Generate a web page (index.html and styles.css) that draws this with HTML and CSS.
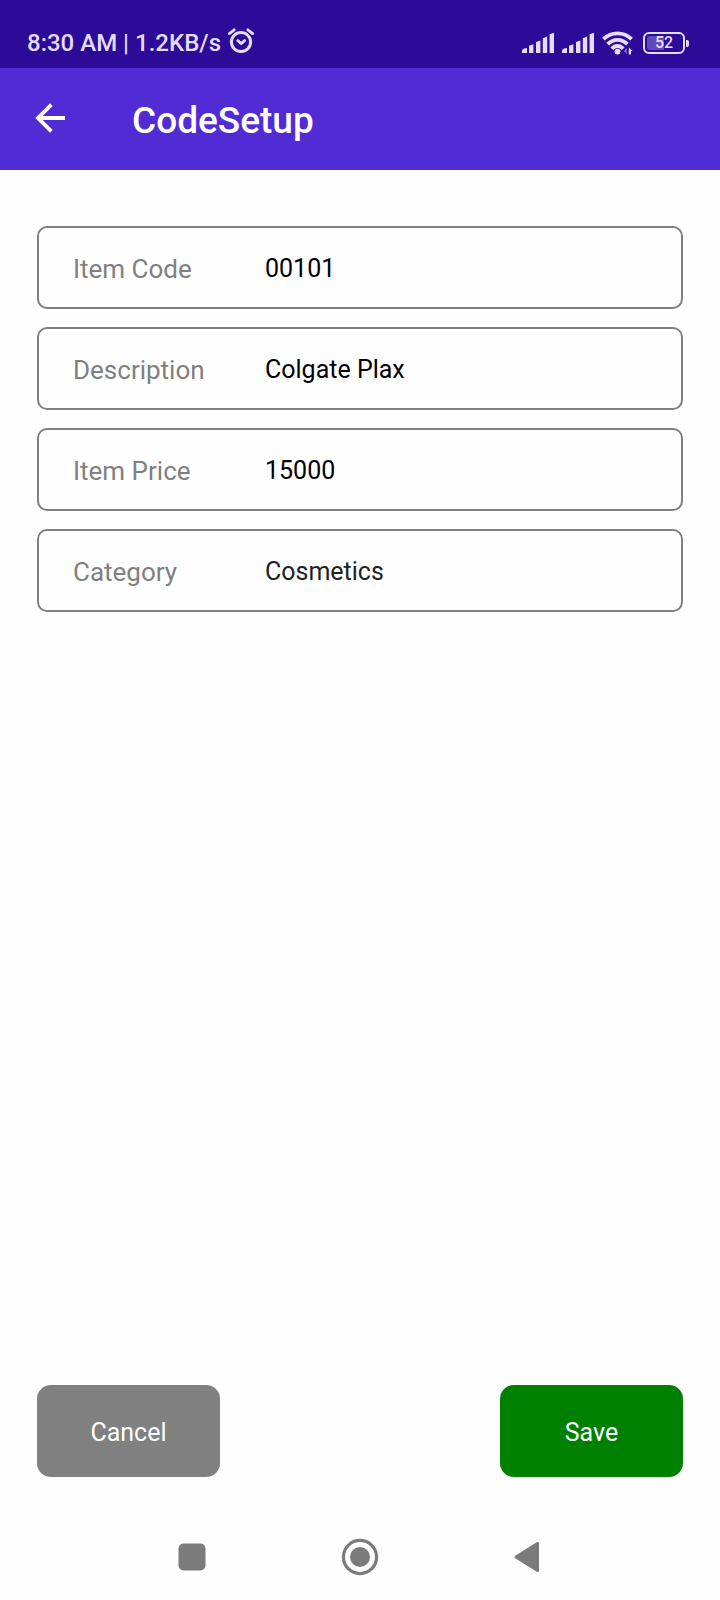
FILE: index.html
```html
<!DOCTYPE html>
<html lang="en">
<head>
<meta charset="utf-8">
<meta name="viewport" content="width=device-width, initial-scale=1">
<title>CodeSetup</title>
<link rel="stylesheet" href="styles.css">
</head>
<body>
<div class="screen">
  <div class="status-bar">
    <div class="status-left">
      <span>8:30 AM | 1.2KB/s</span>
      <svg class="alarm" width="28" height="26" viewBox="0 0 28 26" fill="none" stroke="currentColor" stroke-linecap="round" aria-hidden="true">
        <circle cx="14" cy="14" r="9.6" stroke-width="3"/>
        <path d="M2.400 5.600 7.200 1.800M20.800 1.800l4.800 3.800" stroke-width="2.800"/>
        <path d="M10.800 12.600l3.200 3 3.600-3" stroke-width="2.800" stroke-linejoin="round"/>
      </svg>
    </div>
    <div class="status-right">
      <svg width="32" height="22" viewBox="0 0 32 22" fill="currentColor" aria-hidden="true">
        <path d="M0 21v-2.200q.4-1.800 2.200-2.200L5 16v5zM7 21v-7.200l4.400-1.600V21zM14 21v-11l4.400-1.600V21zM20.800 21V6.200l4.400-1.600V21zM27.600 21V2.200L32 .8V21z"/>
      </svg>
      <svg width="32" height="22" viewBox="0 0 32 22" fill="currentColor" aria-hidden="true">
        <path d="M0 21v-2.200q.4-1.800 2.200-2.200L5 16v5zM7 21v-7.200l4.400-1.600V21zM14 21v-11l4.400-1.600V21zM20.800 21V6.200l4.400-1.600V21zM27.600 21V2.200L32 .8V21z"/>
      </svg>
      <svg width="32" height="24" viewBox="0 0 32 24" fill="none" stroke="currentColor" stroke-width="3.800" aria-hidden="true">
        <path d="M1.400 8.200Q7.500 2.400 15.500 2.400T29.600 8.200"/>
        <path d="M5.600 13.200Q10 8.800 15.500 8.800T25.400 13.200"/>
        <path d="M9.800 17.800Q12.400 15 15.500 15T21.200 17.800"/>
        <circle cx="15.500" cy="20.600" r="2.900" fill="currentColor" stroke="none"/>
        <path d="M25 17v6l-3.400-3z" fill="#7560cf" stroke="none"/>
        <path d="M26.800 23.400v-7l3.800 3.600h-1.600v3.400z" fill="currentColor" stroke="none"/>
      </svg>
      <div class="battery"><span class="battery-level">52</span></div>
    </div>
  </div>

  <header class="app-bar">
    <button class="back" type="button" aria-label="Back">
      <svg width="32" height="32" viewBox="0 0 32 32" fill="none" stroke="currentColor" stroke-width="3.800" aria-hidden="true">
        <path d="M31 16H4M17.400 2.600 4 16l13.400 13.400"/>
      </svg>
    </button>
    <h1 class="title">CodeSetup</h1>
  </header>

  <form class="form">
    <div class="fields">
      <div class="field">
        <label class="label" for="code">Item Code</label>
        <input class="value" id="code" type="text" value="00101">
      </div>
      <div class="field">
        <label class="label" for="description">Description</label>
        <input class="value" id="description" type="text" value="Colgate Plax">
      </div>
      <div class="field">
        <label class="label" for="price">Item Price</label>
        <input class="value" id="price" type="text" inputmode="numeric" value="15000">
      </div>
      <div class="field">
        <label class="label" for="category">Category</label>
        <select class="value value-select" id="category"><option>Cosmetics</option></select>
      </div>
    </div>
    <div class="actions">
      <button class="action cancel" type="button">Cancel</button>
      <button class="action save" type="submit">Save</button>
    </div>
  </form>

  <nav class="nav-bar" aria-label="System">
    <button class="nav-button" type="button" aria-label="Recent apps">
      <svg width="38" height="38" viewBox="0 0 38 38" fill="currentColor" aria-hidden="true"><rect x="5.500" y="5.500" width="27" height="27" rx="5"/></svg>
    </button>
    <button class="nav-button" type="button" aria-label="Home">
      <svg width="38" height="38" viewBox="0 0 38 38" fill="currentColor" aria-hidden="true"><circle cx="19" cy="19" r="16.600" fill="none" stroke="currentColor" stroke-width="3.200"/><circle cx="19" cy="19" r="10"/></svg>
    </button>
    <button class="nav-button" type="button" aria-label="Back">
      <svg width="38" height="38" viewBox="0 0 38 38" fill="currentColor" stroke="currentColor" stroke-width="3" stroke-linejoin="round" aria-hidden="true"><path d="M7 19 28.500 5.500v27z"/></svg>
    </button>
  </nav>
</div>
</body>
</html>
```

FILE: styles.css
```css
* {
  box-sizing: border-box;
}

body {
  margin: 0;
  background: #fefefe;
  font-family: Roboto, "Liberation Sans", sans-serif;
  font-size: 26px;
}

button,
input,
select {
  margin: 0;
  padding: 0;
  border: 0;
  background: none;
  color: inherit;
  font: inherit;
}

svg {
  display: block;
  flex: none;
}

.screen {
  display: flex;
  flex-direction: column;
  min-height: 100vh;
}

.status-bar {
  display: flex;
  justify-content: space-between;
  padding: 28px 31px 10px 27px;
  background: #2b0b98;
  color: #e6dcfa;
}

.status-left,
.status-right {
  display: flex;
  align-items: center;
}

.status-left {
  gap: 6px;
  font-size: 24px;
  font-weight: 500;
  line-height: 28px;
}

.alarm {
  margin-bottom: 4px;
}

.status-right {
  gap: 8px;
}

.battery {
  display: flex;
  align-items: center;
  margin-left: 1px;
}

.battery-level {
  width: 42px;
  border: 2px solid currentColor;
  border-radius: 6px;
  background: linear-gradient(90deg, #6049bd 50%, transparent 50%) content-box;
  padding: 2px;
  font-size: 16px;
  font-weight: 500;
  line-height: 14px;
  text-align: center;
}

.battery::after {
  content: "";
  width: 3px;
  height: 7px;
  margin-left: 1px;
  border-radius: 0 2px 2px 0;
  background: currentColor;
}

.app-bar {
  display: flex;
  align-items: center;
  gap: 66px;
  padding: 29px 34px 28px;
  background: #512bd4;
  color: #fff;
}

.back {
  padding-bottom: 4px;
}

.title {
  margin: 0;
  padding-top: 2px;
  font-size: 37px;
  font-weight: 500;
  line-height: 43px;
}

.form {
  display: flex;
  flex: 1;
  flex-direction: column;
  justify-content: space-between;
  gap: 36px;
  padding: 56px 37px 36px;
}

.fields {
  display: flex;
  flex-direction: column;
  gap: 18px;
}

.field {
  display: grid;
  grid-template-columns: 192px 1fr;
  align-items: center;
  padding: 23px 34px 21px;
  border: 2px solid #808080;
  border-radius: 10px;
  line-height: 35px;
}

.label {
  padding-top: 2px;
  line-height: 33px;
  color: #808080;
}

.value {
  min-width: 0;
  height: 35px;
  outline: 0;
  font-size: 25px;
  color: #000;
}

.value-select {
  appearance: none;
  color: #212121;
}

.actions {
  display: flex;
  justify-content: space-between;
}

.action {
  width: 183px;
  height: 92px;
  padding-top: 2px;
  border-radius: 14px;
  font-size: 25px;
  color: #fff;
}

.cancel {
  background: #808080;
}

.save {
  background: #008000;
}

.nav-bar {
  display: flex;
  justify-content: center;
  gap: 130px;
  padding: 25px 0 24px;
  color: #7b7b7b;
}

.nav-button {
  display: block;
}
```
